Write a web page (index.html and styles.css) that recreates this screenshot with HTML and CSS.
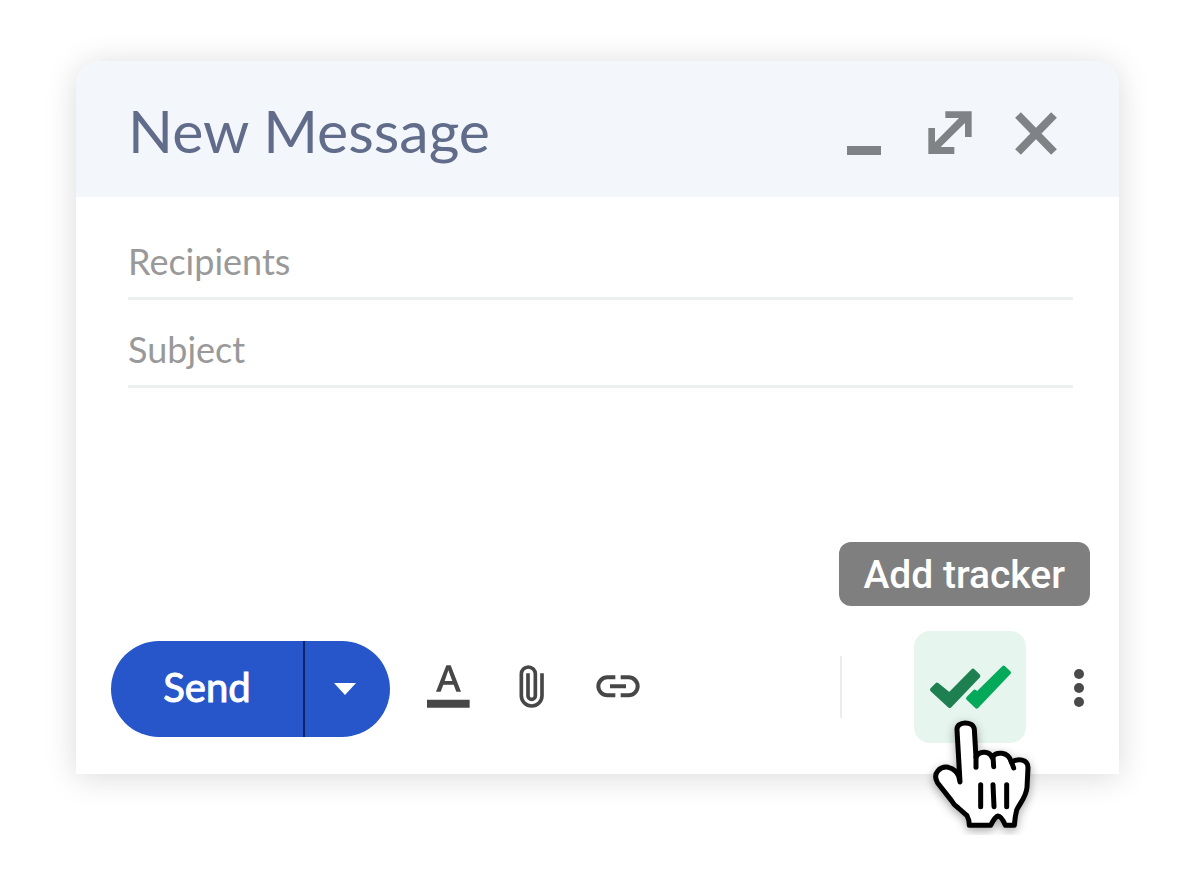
FILE: index.html
```
<!DOCTYPE html>
<html lang="en">
<head>
<meta charset="utf-8">
<meta name="viewport" content="width=device-width, initial-scale=1">
<title>New Message</title>
<link rel="stylesheet" href="styles.css">
</head>
<body>
<main class="compose">
  <header class="compose-header">
    <h1 class="title">New Message</h1>
    <div class="window-controls">
      <button class="control" type="button" aria-label="Minimize">
        <svg width="44" height="44" viewBox="0 0 44 44"><path d="M5 35h34v9H5z" fill="#7f8385"/></svg>
      </button>
      <button class="control" type="button" aria-label="Expand">
        <svg width="44" height="44" viewBox="0 0 132 132"><path d="M52 1h79v77h-20V36L38 108h41v21H1V51h20v43L93 21H52z" fill="#7f8385"/></svg>
      </button>
      <button class="control" type="button" aria-label="Close">
        <svg width="44" height="44" viewBox="0 0 44 44"><path d="M4 4 40 41M40 4 4 41" stroke="#7f8385" stroke-width="8" fill="none"/></svg>
      </button>
    </div>
  </header>
  <form class="compose-form">
    <div class="fields">
      <input class="field" type="text" aria-label="Recipients" placeholder="Recipients">
      <input class="field" type="text" aria-label="Subject" placeholder="Subject">
      <textarea class="message" aria-label="Message body"></textarea>
    </div>
    <div class="toolbar">
      <div class="send-group">
        <button class="send" type="button">Send</button>
        <button class="send-options" type="button" aria-label="Send options">
          <svg width="22" height="12" viewBox="0 0 22 12"><path d="M0 0h22L11 12z" fill="#fff"/></svg>
        </button>
      </div>
      <div class="tools">
        <button class="tool" type="button" aria-label="Formatting options">
          <svg width="44" height="44" viewBox="0 0 132 132"><path d="M30 80 61 1h13l31 79H91l-8-21H52l-8 21zM56 48h23L67 16z" fill="#474747"/><path d="M3 104h128v24H3z" fill="#474747"/></svg>
        </button>
        <button class="tool" type="button" aria-label="Attach file">
          <svg width="44" height="44" viewBox="0 0 132 132"><path d="M93 25v67a31 31 0 0 1-62 0V27a21 21 0 0 1 42 0v65a11 11 0 0 1-22 0V25" fill="none" stroke="#474747" stroke-width="11"/></svg>
        </button>
        <button class="tool" type="button" aria-label="Insert link">
          <svg width="44" height="44" viewBox="0 0 132 132"><path d="M58 37H34a27 27 0 0 0 0 54h24M74 37h24a27 27 0 0 1 0 54H74M42 64h48" fill="none" stroke="#474747" stroke-width="12"/></svg>
        </button>
      </div>
      <div class="extras">
        <span class="divider"></span>
        <div class="tracker-wrap">
          <span class="tooltip" id="tracker-tip" role="tooltip">Add tracker</span>
          <button class="tracker" type="button" aria-label="Add tracker" aria-describedby="tracker-tip">
            <svg width="112" height="112" viewBox="72 33 336 336">
              <path d="M126 209 141 194 178 224 249 152 265 168 179 258z" fill="#1e7f50" stroke="#1e7f50" stroke-width="12" stroke-linejoin="round"/>
              <path d="m234 235 20-20 8 6 79-78 16 15-97 102z" fill="#04a95a" stroke="#04a95a" stroke-width="12" stroke-linejoin="round"/>
            </svg>
          </button>
          <svg class="pointer" width="140" height="150" viewBox="0 0 420 450" aria-hidden="true">
            <path d="M150 246 141 90C139 62 190 62 193 88L198 172C207 150 239 153 246 172C258 154 294 153 304 186C324 174 354 177 354 203L351 262C349 289 332 306 320 330Q315 350 313 376H286Q274 348 264 348Q255 350 242 376H178Q178 360 171 347L145 324Q132 316 124 301L83 249C65 218 92 198 115 202Q138 208 146 228z" fill="#fff" stroke="#000" stroke-width="15" stroke-linejoin="round"/>
            <path d="M198 170v32M249 170 251 200M304 184 311 204M212 254v66M249 254 252 320M290 254v66" fill="none" stroke="#000" stroke-width="15" stroke-linecap="round"/>
          </svg>
        </div>
        <button class="more" type="button" aria-label="More options">
          <svg width="10" height="40" viewBox="0 0 10 40" fill="#4a4a4a"><circle cx="5" cy="6" r="5"/><circle cx="5" cy="20" r="5"/><circle cx="5" cy="34" r="5"/></svg>
        </button>
      </div>
    </div>
  </form>
</main>
</body>
</html>
```
FILE: styles.css
```
* {
  box-sizing: border-box;
}

body {
  margin: 0;
  padding: 61px 81px 61px 76px;
  background: #fff;
  font-family: Lato, "Open Sans", sans-serif;
}

button,
input,
textarea {
  margin: 0;
  padding: 0;
  border: 0;
  background: none;
  font: inherit;
  color: inherit;
}

button {
  cursor: pointer;
}

svg {
  display: block;
}

.compose {
  background: #fff;
  border-radius: 24px 24px 0 0;
  box-shadow: 0 3px 32px rgba(0, 0, 0, 0.15);
}

.compose-header {
  display: flex;
  align-items: center;
  justify-content: space-between;
  padding: 32px 61px 32px 52px;
  border-radius: 24px 24px 0 0;
  background: #f3f6fb;
}

.title {
  margin: 0;
  padding-top: 4px;
  font-size: 59px;
  line-height: 68px;
  font-weight: 400;
  color: #616c8b;
}

.window-controls {
  display: flex;
  gap: 42px;
  padding-top: 8px;
}

.fields {
  display: flex;
  flex-direction: column;
  padding: 15px 46px 0 52px;
}

.field {
  width: 100%;
  height: 88px;
  padding-top: 12px;
  border-bottom: 3px solid #eeeff0;
  font-size: 36px;
  color: #555;
}

.field::placeholder {
  color: #999;
  opacity: 1;
}

.message {
  height: 243px;
  resize: none;
  font-size: 36px;
}

.field:focus,
.message:focus {
  outline: none;
}

.toolbar {
  display: flex;
  align-items: center;
  padding: 0 20px 31px 35px;
}

.send-group {
  display: flex;
  height: 96px;
  margin-top: 4px;
  border-radius: 48px;
  overflow: hidden;
  background: #2656c9;
  color: #fff;
}

.send {
  width: 192px;
  padding-bottom: 4px;
  font-size: 40px;
  -webkit-text-stroke: 1px #fff;
}

.send-options {
  display: flex;
  align-items: center;
  justify-content: center;
  width: 87px;
  padding-right: 6px;
  border-left: 2px solid #0b2568;
}

.tools {
  display: flex;
  gap: 41px;
  margin-left: 36px;
}

.extras {
  display: flex;
  align-items: center;
  margin-left: auto;
}

.divider {
  width: 2px;
  height: 62px;
  margin-right: 72px;
  background: #ececec;
}

.tracker-wrap {
  position: relative;
}

.tracker {
  display: block;
  border-radius: 16px;
  background: #e6f5ee;
}

.tooltip {
  position: absolute;
  right: -64px;
  bottom: 137px;
  padding: 9px 25px 7px 24px;
  border-radius: 12px;
  background: #7f7f7f;
  color: #fff;
  font-family: Roboto, sans-serif;
  font-size: 39px;
  line-height: 48px;
  font-weight: 500;
  white-space: nowrap;
}

.pointer {
  position: absolute;
  left: -4px;
  top: 69px;
  pointer-events: none;
  filter: drop-shadow(0 3px 5px rgba(0, 0, 0, 0.35));
}

.more {
  display: flex;
  justify-content: center;
  width: 40px;
  margin-left: 33px;
  padding-top: 2px;
}
```
